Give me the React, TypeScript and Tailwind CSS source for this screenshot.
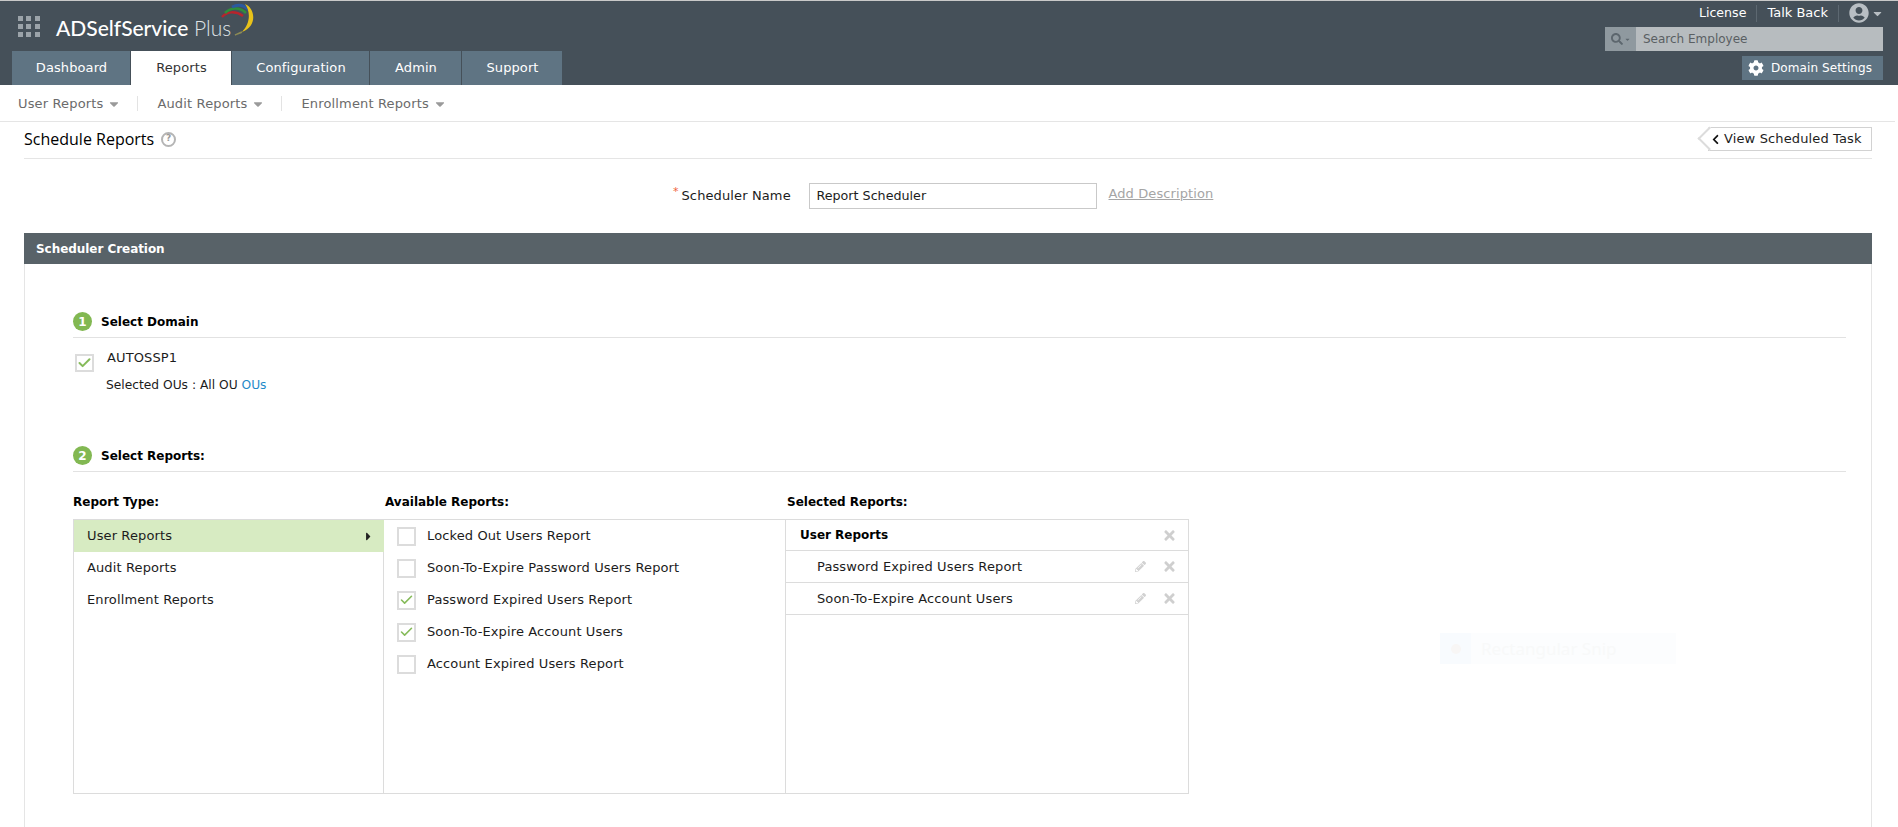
import React from "react";
import { FaCog, FaSearch, FaCaretDown, FaCaretRight, FaChevronLeft, FaUserCircle, FaTimes, FaPencilAlt } from "react-icons/fa";
import { Check as CheckMark } from "lucide-react";

function Tab({ label, active, w }: { label: string; active?: boolean; w: string }) {
  return (
    <div className={`${w} h-full flex items-center justify-center pl-px text-[13px] tracking-[0.1px] ${active ? "bg-white text-[#333]" : "bg-[#5f7483] text-white"}`}>
      {label}
    </div>
  );
}

function SubNav({ label }: { label: string }) {
  return (
    <div className="flex items-center gap-[4px] text-[13px] tracking-[0.15px] text-[#6b6b6b]">
      <span>{label}</span>
      <FaCaretDown className="text-[#9a9a9a] text-[14px]" />
    </div>
  );
}

function Check({ checked, size, bold }: { checked?: boolean; size: string; bold?: boolean }) {
  return (
    <div className={`${size} shrink-0 border-2 border-[#dcdcdc] bg-white flex items-center justify-center`}>
      {checked && <CheckMark size={16} strokeWidth={bold ? 3.25 : 2.5} className="text-[#86bb5a]" />}
    </div>
  );
}

function Step({ n, title }: { n: number; title: string }) {
  return (
    <div className="flex items-center gap-[9px] h-[19px] pb-[6px] box-content border-b border-[#e2e2e2]">
      <div className="w-[19px] h-[19px] rounded-full bg-[#82b852] text-white text-[12px] font-bold flex items-center justify-center">{n}</div>
      <span className="text-[12px] font-bold text-black">{title}</span>
    </div>
  );
}

function Available({ label, checked }: { label: string; checked?: boolean }) {
  return (
    <div className="h-[32px] flex items-center pl-[13px] gap-[9px] text-[13px] tracking-[0.12px] text-[#1c1c1c]">
      <Check checked={checked} size="w-[19px] h-[19px]" />
      <span className="ml-[2px]">{label}</span>
    </div>
  );
}

function Selected({ label }: { label: string }) {
  return (
    <div className="h-[32px] flex items-center border-b border-[#dcdcdc] pl-[31px] pr-[11px] text-[13px] tracking-[0.12px] text-[#1c1c1c]">
      <span className="flex-1">{label}</span>
      <FaPencilAlt className="text-[#d2d2d2] text-[11px] mr-[16px]" />
      <FaTimes className="text-[#cfcfcf] text-[15px]" />
    </div>
  );
}

export default function App() {
  return (
    <div className="relative h-[827px] overflow-hidden bg-white font-['DejaVu_Sans','Liberation_Sans',sans-serif]">
      <header className="h-[85px] bg-[#455059] border-t border-[#c9c9c9] flex justify-between">
        <div className="flex flex-col justify-between pl-[12px]">
          <div className="flex items-center h-[50px] pl-[6px]">
            <div className="grid grid-cols-3 gap-[3px] w-[22px]">
              {Array.from({ length: 9 }).map((_, i) => (
                <div key={i} className="w-[5px] h-[5px] bg-[#9ba3a9]" />
              ))}
            </div>
            <div className="relative ml-[16px] mt-[3px] font-['Lato',sans-serif] text-[21px] text-white leading-none whitespace-nowrap">
              <span className="font-medium">ADSelfService</span>
              <span className="font-light text-[#dfe3e6]"> Plus</span>
              <svg className="absolute left-[162px] -top-[15px]" width="40" height="36" viewBox="0 0 40 36" fill="none">
                <path d="M4 15 C 9 9, 18 9, 25 14" stroke="#b8242c" strokeWidth="2.5" />
                <path d="M7 11 C 13 5, 22 5, 28 11" stroke="#2f8f3c" strokeWidth="2.5" />
                <path d="M14 5 C 20 2, 26 3, 31 8" stroke="#2b5aa0" strokeWidth="3" />
                <path d="M27 2 C 37 6, 40 24, 24 30 C 32 22, 33 10, 27 2 Z" fill="#e8c21a" />
                <path d="M24 30 C 22 31, 19 32, 17 33" stroke="#8c8a55" strokeWidth="1.5" />
              </svg>
            </div>
          </div>
          <div className="flex h-[34px] gap-px">
            <Tab label="Dashboard" w="w-[118px]" />
            <Tab label="Reports" active w="w-[100px]" />
            <Tab label="Configuration" w="w-[137px]" />
            <Tab label="Admin" w="w-[91px]" />
            <Tab label="Support" w="w-[100px]" />
          </div>
        </div>
        <div className="flex flex-col items-end pr-[15px]">
          <div className="flex items-center h-[24px] text-[13px] text-white">
            <span className="text-[12.6px]">License</span>
            <span className="w-px h-[17px] bg-[#5d6871] mx-[10px]" />
            <span>Talk Back</span>
            <span className="w-px h-[17px] bg-[#5d6871] mx-[10px]" />
            <FaUserCircle className="text-[#b8bec3] text-[20px]" />
            <FaCaretDown className="text-[#b8bec3] text-[13px] ml-[2px] -mr-[1px]" />
          </div>
          <div className="mt-[2px] flex w-[278px] h-[24px]">
            <div className="w-[31px] bg-[#8f999f] flex items-center justify-center gap-px">
              <FaSearch className="text-[#5d676e] text-[12px]" />
              <FaCaretDown className="text-[#5d676e] text-[7px]" />
            </div>
            <div className="flex-1 bg-[#b7bcbf] flex items-center pl-[7px] text-[12px] text-[#5a5f63]">Search Employee</div>
          </div>
          <div className="mt-[5px] w-[141px] h-[24px] pb-px bg-[#5f7483] flex items-center pl-[6px] gap-[7px] text-[12px] tracking-[0.1px] text-white whitespace-nowrap">
            <FaCog className="text-[16px]" />
            <span>Domain Settings</span>
          </div>
        </div>
      </header>

      <nav className="h-[37px] pt-px border-b border-[#e5e5e5] flex items-center pl-[18px] mr-[3px]">
        <SubNav label="User Reports" />
        <span className="w-px h-[15px] bg-[#e3e3e3] ml-[16px] mr-[19px]" />
        <SubNav label="Audit Reports" />
        <span className="w-px h-[15px] bg-[#e3e3e3] ml-[16px] mr-[19px]" />
        <SubNav label="Enrollment Reports" />
      </nav>

      <main className="px-[24px] mr-[2px]">
        <div className="h-[37px] border-b border-[#e5e5e5] flex items-center justify-between pb-[2px]">
          <div className="flex items-center gap-[7px]">
            <span className="font-['Open_Sans',sans-serif] text-[16px] text-black">Schedule Reports</span>
            <span className="w-[15px] h-[15px] rounded-full border-2 border-[#b5b5b5] text-[#9a9a9a] text-[9px] font-bold flex items-center justify-center">?</span>
          </div>
          <div className="relative h-[24px] w-[164px] border border-[#d2d2d2] flex items-center pl-px gap-[3px] text-[13px] tracking-[0.13px] text-[#1d1d1d] whitespace-nowrap">
            <div className="absolute -left-[8px] top-[2px] w-[17px] h-[17px] rotate-45 border-l-2 border-b-2 border-[#dcdcdc] bg-white" />
            <FaChevronLeft className="relative text-[11px] text-[#111]" />
            <span className="relative">View Scheduled Task</span>
          </div>
        </div>

        <div className="h-[74px] flex items-center pl-[649px] pb-[1px]">
          <span className="text-[#f0643c] text-[11px] -mt-[6px]">*</span>
          <span className="ml-[3px] text-[13px] tracking-[0.12px] text-[#1c1c1c] w-[127px]">Scheduler Name</span>
          <div className="w-[288px] h-[26px] border border-[#c9c9c9] flex items-center pl-[7px] text-[12.7px] text-[#1c1c1c]">Report Scheduler</div>
          <span className="ml-[12px] text-[13px] tracking-[0.1px] text-[#a5a5a5] underline -mt-[3px]">Add Description</span>
        </div>

        <section className="border border-[#e5e5e5] h-[600px]">
          <div className="-mx-px -mt-px h-[31px] bg-[#586268] text-white text-[12px] tracking-[-0.05px] font-bold flex items-center pl-[12px]">Scheduler Creation</div>
          <div className="pl-[48px] pr-[25px] pt-[48px]">
            <Step n={1} title="Select Domain" />
            <div className="flex mt-[16px] pl-[2px] gap-[13px]">
              <Check checked bold size="w-[19px] h-[18px]" />
              <div className="-mt-[7px]">
                <div className="text-[13px] tracking-[0.12px] text-[#1c1c1c] h-[22px] flex items-center">AUTOSSP1</div>
                <div className="text-[12.25px] text-[#1c1c1c] mt-[6px] h-[20px] flex items-center -ml-px whitespace-pre">
                  Selected OUs : All OU <span className="text-[#1f8ac9]">OUs</span>
                </div>
              </div>
            </div>

            <div className="mt-[51px]">
              <Step n={2} title="Select Reports:" />
            </div>

            <div className="flex mt-[22px] h-[16px] items-center text-[12px] font-bold text-black">
              <span className="w-[312px]">Report Type:</span>
              <span className="w-[402px]">Available Reports:</span>
              <span>Selected Reports:</span>
            </div>

            <div className="mt-[9px] w-[1116px] h-[275px] border border-[#dcdcdc] flex">
              <div className="w-[310px] shrink-0 border-r border-[#dcdcdc] text-[13px] tracking-[0.12px] text-[#1c1c1c]">
                <div className="h-[32px] bg-[#d7ebc2] flex items-center justify-between pl-[13px] pr-[9px] -mr-px">
                  <span>User Reports</span>
                  <FaCaretRight className="text-[#222] text-[13px]" />
                </div>
                <div className="h-[32px] flex items-center pl-[13px]">Audit Reports</div>
                <div className="h-[32px] flex items-center pl-[13px]">Enrollment Reports</div>
              </div>
              <div className="w-[402px] shrink-0 border-r border-[#dcdcdc]">
                <Available label="Locked Out Users Report" />
                <Available label="Soon-To-Expire Password Users Report" />
                <Available label="Password Expired Users Report" checked />
                <Available label="Soon-To-Expire Account Users" checked />
                <Available label="Account Expired Users Report" />
              </div>
              <div className="flex-1">
                <div className="h-[31px] flex items-center border-b border-[#dcdcdc] pl-[14px] pr-[11px] text-[12px] font-bold text-black">
                  <span className="flex-1">User Reports</span>
                  <FaTimes className="text-[#cfcfcf] text-[15px]" />
                </div>
                <Selected label="Password Expired Users Report" />
                <Selected label="Soon-To-Expire Account Users" />
              </div>
            </div>
          </div>
        </section>
      </main>

      <div className="absolute left-[1440px] top-[633px] w-[236px] h-[31px] bg-[#fcfdfe] flex items-center font-['Noto_Sans',sans-serif] text-[17px] text-[#f8f9f9]">
        <div className="w-[31px] h-full bg-[#f8fbfe] flex items-center justify-center">
          <div className="w-[10px] h-[10px] rounded-full bg-[#f8f6f5]" />
        </div>
        <span className="ml-[10px]">Rectangular Snip</span>
      </div>
    </div>
  );
}
